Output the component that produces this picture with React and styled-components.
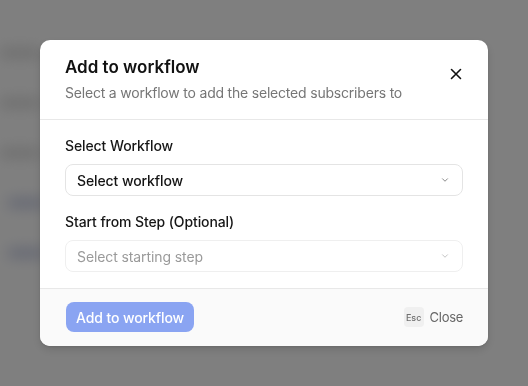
import React from "react";
import styled, { createGlobalStyle } from "styled-components";

const GlobalStyle = createGlobalStyle`
  * { box-sizing: border-box; }
  html, body { margin: 0; height: 100%; }
  body {
    font-family: Inter, "Noto Sans", sans-serif;
    background: #ffffff;
    overflow: hidden;
  }
`;

const Page = styled.div`
  width: 528px;
  height: 386px;
  display: flex;
  flex-direction: column;
  gap: 40px;
  filter: blur(7px);
`;

const BgRow = styled.div`
  height: ${(p) => p.h || 12}px;
  width: ${(p) => p.w}px;
  margin-left: ${(p) => p.x || 0}px;
  background: ${(p) => p.color};
  border-radius: 4px;
`;

const Overlay = styled.div`
  position: fixed;
  inset: 0;
  background: rgba(0, 0, 0, 0.5);
  display: flex;
  align-items: center;
  justify-content: center;
`;

const Dialog = styled.div`
  width: 448px;
  background: #ffffff;
  border-radius: 10px;
  overflow: hidden;
  box-shadow: 0 4px 10px rgba(0, 0, 0, 0.12), 0 1px 3px rgba(0, 0, 0, 0.1);
`;

const Header = styled.div`
  display: flex;
  align-items: flex-start;
  justify-content: space-between;
  padding: 14px 24px 16px 25px;
  border-bottom: 1px solid #e8e8e8;
`;

const Titles = styled.div`
  display: flex;
  flex-direction: column;
  gap: 3px;
`;

const Title = styled.h2`
  margin: 0;
  font-size: 17px;
  line-height: 26px;
  font-weight: 600;
  color: #111111;
`;

const Subtitle = styled.p`
  margin: 0;
  font-size: 14px;
  line-height: 20px;
  color: #767676;
  letter-spacing: -0.2px;
`;

const CloseButton = styled.button`
  border: 0;
  background: none;
  padding: 0;
  margin-top: 12px;
  width: 16px;
  height: 16px;
  display: flex;
  align-items: center;
  justify-content: center;
  color: #111111;
`;

const Body = styled.div`
  display: flex;
  flex-direction: column;
  padding: 16px 25px 16px 25px;
`;

const Field = styled.div`
  display: flex;
  flex-direction: column;
  gap: 8px;
  margin-bottom: 16px;
  &:last-child { margin-bottom: 0; }
`;

const Label = styled.label`
  font-size: 14px;
  line-height: 20px;
  font-weight: 500;
  color: #161616;
  letter-spacing: -0.1px;
`;

const Select = styled.div`
  height: 32px;
  border: 1px solid ${(p) => (p.disabled ? "#efefef" : "#e4e4e4")};
  border-radius: 8px;
  display: flex;
  align-items: center;
  justify-content: space-between;
  padding: 0 12px 0 11px;
  font-size: 14px;
  letter-spacing: -0.1px;
  font-weight: ${(p) => (p.disabled ? 400 : 500)};
  color: ${(p) => (p.disabled ? "#9a9a9a" : "#141414")};
  svg { color: ${(p) => (p.disabled ? "#c4c4c4" : "#8a8a8a")}; }
`;

const Footer = styled.div`
  display: flex;
  align-items: center;
  justify-content: space-between;
  padding: 13px 25px 14px 26px;
  background: #fafafa;
  border-top: 1px solid #e8e8e8;
`;

const PrimaryButton = styled.button`
  height: 30px;
  width: 128px;
  border: 0;
  border-radius: 8px;
  background: #8aa4f2;
  color: #ffffff;
  font-family: inherit;
  font-size: 14px;
  font-weight: 500;
  letter-spacing: -0.1px;
`;

const CloseAction = styled.div`
  display: flex;
  align-items: center;
  gap: 6px;
  font-size: 13px;
  letter-spacing: -0.3px;
  color: #666666;
`;

const Kbd = styled.span`
  width: 20px;
  height: 20px;
  display: flex;
  align-items: center;
  justify-content: center;
  border-radius: 4px;
  background: #f0f0f0;
  font-size: 9px;
  font-weight: 500;
  letter-spacing: 0;
  color: #707070;
`;

const Chevron = () => (
  <svg width="10" height="10" viewBox="0 0 24 24" fill="none" stroke="currentColor" strokeWidth="2.4" strokeLinecap="round" strokeLinejoin="round">
    <path d="m6 9 6 6 6-6" />
  </svg>
);

const XIcon = () => (
  <svg width="12" height="12" viewBox="0 0 12 12" fill="none" stroke="currentColor" strokeWidth="1.6" strokeLinecap="round">
    <path d="M1.5 1.5l9 9M10.5 1.5l-9 9" />
  </svg>
);

const App = () => {
  return (
    <>
      <GlobalStyle />
      <Page>
        <BgRow x={40} w={70} h={8} color="#ffffff" />
        <BgRow x={0} w={40} h={10} color="#dcdcdc" />
        <BgRow x={0} w={40} h={10} color="#dcdcdc" />
        <BgRow x={0} w={40} h={10} color="#dcdcdc" />
        <BgRow x={8} w={36} h={10} color="#c9cfe6" />
        <BgRow x={8} w={36} h={10} color="#c9cfe6" />
      </Page>
      <Overlay>
        <Dialog>
          <Header>
            <Titles>
              <Title>Add to workflow</Title>
              <Subtitle>Select a workflow to add the selected subscribers to</Subtitle>
            </Titles>
            <CloseButton aria-label="Close">
              <XIcon />
            </CloseButton>
          </Header>
          <Body>
            <Field>
              <Label>Select Workflow</Label>
              <Select>
                Select workflow
                <Chevron />
              </Select>
            </Field>
            <Field>
              <Label>Start from Step (Optional)</Label>
              <Select disabled>
                Select starting step
                <Chevron />
              </Select>
            </Field>
          </Body>
          <Footer>
            <PrimaryButton>Add to workflow</PrimaryButton>
            <CloseAction>
              <Kbd>Esc</Kbd>
              Close
            </CloseAction>
          </Footer>
        </Dialog>
      </Overlay>
    </>
  );
};

export default App;
